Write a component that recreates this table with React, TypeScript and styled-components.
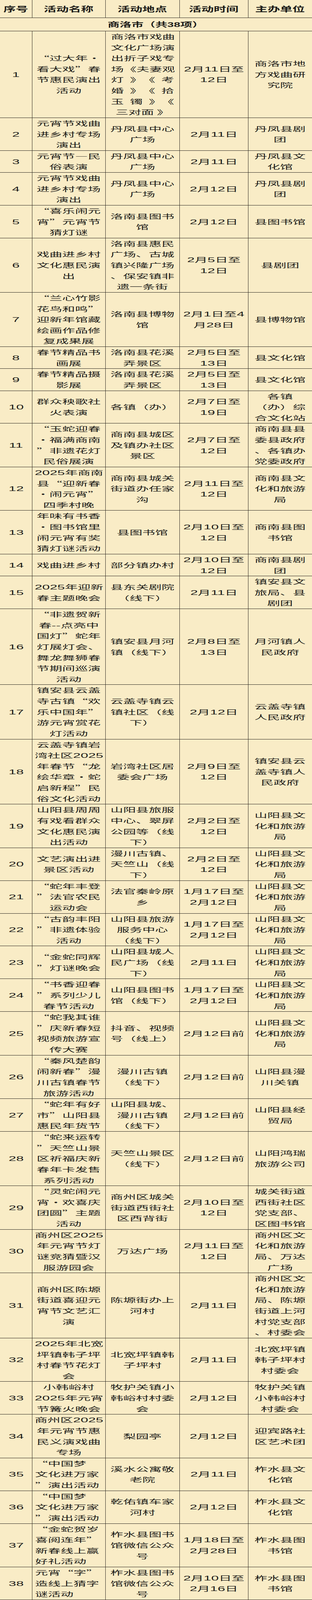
import React from "react";
import styled, { createGlobalStyle, css } from "styled-components";

// the sheet is a document table whose photo is stretched sideways; the
// frame also comes out taller than the page is laid out, so heights are
// given in frame pixels and divided back by SQUEEZE
const SQUEEZE = 1.527;
const v = (framePx: number) => `${(framePx / SQUEEZE).toFixed(2)}px`;

const STRETCH = 2.05;
const LINE = v(42.19);
const BG = "#f9ecc6";
const INK = "#1c1b18";
const RULE = "#2e2a22";

type Entry = {
  name: string[];
  place: string[];
  time: string[];
  org: string[];
  nameLeft?: boolean;
  placeJustify?: boolean;
};

const entries: Entry[] = [
  { name: ["“过大年·", "看大戏”春", "节惠民演出", "活动"], place: ["商洛市戏曲", "文化广场演", "出折子戏专", "场《夫妻观", "灯》《考", "婚》《拾", "玉镯》《", "三对面 》"], time: ["2月11日至", "12日"], org: ["商洛市地", "方戏曲研", "究院"], placeJustify: true },
  { name: ["元宵节戏曲", "进乡村专场", "演出"], place: ["丹凤县中心", "广场"], time: ["2月11日"], org: ["丹凤县剧", "团"] },
  { name: ["元宵节—民", "俗表演"], place: ["丹凤县中心", "广场"], time: ["2月11日"], org: ["丹凤县文", "化馆"] },
  { name: ["元宵节戏曲", "进乡村专场", "演出"], place: ["丹凤县中心", "广场"], time: ["2月12日"], org: ["丹凤县剧", "团"] },
  { name: ["“喜乐闹元", "宵”元宵节", "猜灯谜"], place: ["洛南县图书", "馆"], time: ["2月12日"], org: ["县图书馆"] },
  { name: ["戏曲进乡村", "文化惠民演", "出"], place: ["洛南县惠民", "广场、古城", "镇兴隆广场", "、保安镇非", "遗一条街"], time: ["2月5日至", "12日"], org: ["县剧团"] },
  { name: ["“兰心竹影", "花鸟和鸣”", "迎新年馆藏", "绘画作品修", "复成果展"], place: ["洛南县博物", "馆"], time: ["2月1日至4", "月28日"], org: ["县博物馆"] },
  { name: ["春节精品书", "画展"], place: ["洛南县花溪", "弄景区"], time: ["2月5日至", "13日"], org: ["县文化馆"] },
  { name: ["春节精品摄", "影展"], place: ["洛南县花溪", "弄景区"], time: ["2月5日至", "13日"], org: ["县文化馆"] },
  { name: ["群众秧歌社", "火表演"], place: ["各镇（办）"], time: ["2月7日至", "19日"], org: ["各镇", "（办）综", "合文化站"] },
  { name: ["“玉蛇迎春", "·福满商南", "”非遗花灯", "民俗展演"], place: ["商南县城区", "及镇办社区", "景区"], time: ["2月7日至", "12日"], org: ["商南县县", "委县政府", "、各镇办", "党委政府"] },
  { name: ["2025年商南", "县“迎新春", "·闹元宵”", "四季村晚"], place: ["商南县城关", "街道办任家", "沟"], time: ["2月11日至", "12日"], org: ["商南县文", "化和旅游", "局"] },
  { name: ["年味有书香", "·图书馆里", "闹元宵有奖", "猜灯谜活动"], place: ["县图书馆"], time: ["2月10日至", "12日"], org: ["商南县图", "书馆"] },
  { name: ["戏曲进乡村"], place: ["部分镇办村"], time: ["2月10日至", "12日"], org: ["商南县剧", "团"] },
  { name: ["2025年迎新", "春主题晚会"], place: ["县东关剧院", "（线下）"], time: ["2月11日"], org: ["镇安县文", "旅局、县", "剧团"] },
  { name: ["“非遗贺新", "春--点亮中", "国灯”蛇年", "灯展灯会、", "舞龙舞狮春", "节期间巡演", "活动"], place: ["镇安县月河", "镇（线下）"], time: ["2月8日至", "13日"], org: ["月河镇人", "民政府"] },
  { name: ["镇安县云盖", "寺古镇“欢", "乐中国年”", "游元宵赏花", "灯活动"], place: ["云盖寺镇云", "镇社区（线", "下）"], time: ["2月12日"], org: ["云盖寺镇", "人民政府"] },
  { name: ["云盖寺镇岩", "湾社区2025", "年春节“龙", "绘华章·蛇", "启新程”民", "俗文化活动"], place: ["岩湾社区居", "委会广场"], time: ["2月9日至", "12日"], org: ["镇安县云", "盖寺镇人", "民政府"] },
  { name: ["山阳县周周", "有戏看群众", "文化惠民演", "出活动"], place: ["山阳县旅服", "中心、翠屏", "公园等（线", "下）"], time: ["2月2日至", "12日"], org: ["山阳县文", "化和旅游", "局"] },
  { name: ["文艺演出进", "景区活动"], place: ["漫川古镇、", "天竺山（线", "下）"], time: ["2月2日至", "12日"], org: ["山阳县文", "化和旅游", "局"] },
  { name: ["“蛇年丰登", "”法官农民", "运动会"], place: ["法官秦岭原", "乡"], time: ["1月17日至", "2月12日"], org: ["山阳县文", "化和旅游", "局"] },
  { name: ["“古韵丰阳", "”非遗体验", "活动"], place: ["山阳县旅游", "服务中心", "（线下）"], time: ["1月17日至", "2月12日"], org: ["山阳县文", "化和旅游", "局"] },
  { name: ["“金蛇同辉", "”灯谜晚会"], place: ["山阳县城人", "民广场（线", "下）"], time: ["2月11日"], org: ["山阳县文", "化和旅游", "局"] },
  { name: ["“书香迎春", "”系列少儿", "春节活动"], place: ["山阳县图书", "馆（线下）"], time: ["1月17日至", "2月12日"], org: ["山阳县文", "化和旅游", "局"] },
  { name: ["“蛇我其谁", "”庆新春短", "视频旅游宣", "传大赛"], place: ["抖音、视频", "号（线上）"], time: ["2月12日前"], org: ["山阳县文", "化和旅游", "局"] },
  { name: ["“秦风楚韵", "闹新春”漫", "川古镇春节", "旅游活动"], place: ["漫川古镇", "（线下）"], time: ["2月12日前"], org: ["山阳县漫", "川关镇"] },
  { name: ["“蛇年有好", "市”山阳县", "惠民年货节"], place: ["山阳县城、", "漫川古镇", "（线下）"], time: ["2月12日前"], org: ["山阳县经", "贸局"] },
  { name: ["“蛇来运转", "”天竺山景", "区祈福庆新", "春年卡发售", "系列活动"], place: ["天竺山景区", "（线下）"], time: ["2月12日前"], org: ["山阳鸿瑞", "旅游公司"] },
  { name: ["“灵蛇闹元", "宵·欢喜庆", "团圆”主题", "活动"], place: ["商州区城关", "街道西街社", "区西背街"], time: ["2月10日至", "12日"], org: ["城关街道", "西街社区", "党支部、", "区图书馆"] },
  { name: ["商州区2025", "年元宵节灯", "谜竞猜暨汉", "服游园会"], place: ["万达广场"], time: ["2月11日至", "12日"], org: ["商州区文", "化和旅游", "局、万达", "广场"] },
  { name: ["商州区陈塬", "街道喜迎元", "宵节文艺汇", "演"], place: ["陈塬街办上", "河村"], time: ["2月11日"], org: ["商州区文", "化和旅游", "局、陈塬", "街道上河", "村党支部", "、村委会"] },
  { name: ["2025年北宽", "坪镇韩子坪", "村春节花灯", "会"], place: ["北宽坪镇韩", "子坪村"], time: ["2月11日"], org: ["北宽坪镇", "韩子坪村", "村委会"] },
  { name: ["小韩峪村", "2025年元宵", "节篝火晚会"], place: ["牧护关镇小", "韩峪村村委", "会"], time: ["2月12日"], org: ["牧护关镇", "小韩峪村", "村委会"] },
  { name: ["商州区2025", "年元宵节惠", "民义演戏曲", "专场"], place: ["梨园亭"], time: ["2月12日"], org: ["迎宾路社", "区艺术团"] },
  { name: ["“中国梦", "文化进万家", "”演出活动"], place: ["溪水公寓敬", "老院"], time: ["2月11日"], org: ["柞水县文", "化馆"], nameLeft: true },
  { name: ["“中国梦", "文化进万家", "”演出活动"], place: ["乾佑镇车家", "河村"], time: ["2月12日"], org: ["柞水县文", "化馆"], nameLeft: true },
  { name: ["“金蛇贺岁", "喜阅连年”", "新春线上赢", "好礼活动"], place: ["柞水县图书", "馆微信公众", "号"], time: ["1月18日至", "2月28日"], org: ["柞水县图", "书馆"], nameLeft: true },
  { name: ["元宵“字”", "造线上猜字", "谜活动"], place: ["柞水县图书", "馆微信公众", "号"], time: ["2月10日至", "2月16日"], org: ["柞水县图", "书馆"], nameLeft: true },
];

const GlobalStyle = createGlobalStyle`
  html, body {
    margin: 0;
    padding: 0;
    background: ${BG};
  }
  body {
    font-family: "Noto Sans CJK SC", "Noto Sans", sans-serif;
    color: ${INK};
    overflow-x: hidden;
  }
`;

const Sheet = styled.div`
  width: 800px;
  font-size: 16px;
  line-height: ${LINE};
`;

const Row = styled.div`
  display: grid;
  grid-template-columns: 82px 188px 190px 176px 1fr;
  border-bottom: 1px solid ${RULE};
`;

const Cell = styled.div<{ $left?: boolean }>`
  display: flex;
  flex-direction: column;
  justify-content: center;
  padding: 0 7px;
  text-align: ${(p) => (p.$left ? "left" : "center")};
  white-space: nowrap;

  &:not(:first-child) {
    border-left: 1.5px solid ${RULE};
  }
`;

const HeadCell = styled(Cell)`
  padding-top: ${v(13)};
  padding-bottom: ${v(13.3)};
  font-size: 18.5px;
  font-weight: 700;
`;

const SectionCell = styled.div`
  grid-column: 1 / -1;
  padding: ${v(4)} 0 ${v(4.3)};
  text-align: center;
  font-size: 17.5px;
  font-weight: 700;
  white-space: nowrap;
`;

const Line = styled.div`
  height: ${LINE};
  flex: 0 0 auto;
`;

const Glyphs = styled.span<{ $left?: boolean; $fill?: number; $stretch: number }>`
  display: inline-block;
  transform: scaleX(${(p) => p.$stretch});
  transform-origin: ${(p) => (p.$left ? "0 50%" : "50% 50%")};
  ${(p) =>
    p.$fill &&
    css`
      width: ${p.$fill}px;
      text-align: justify;
      text-align-last: justify;
    `}
`;

const Num = styled.span`
  font-family: "Liberation Sans Narrow", "Liberation Sans", sans-serif;
  font-size: 17px;
  line-height: 1;
`;

const withNumbers = (text: string) =>
  text.split(/(\d+)/).map((part, i) =>
    /^\d+$/.test(part) ? <Num key={i}>{part}</Num> : part
  );

type TextProps = { text: string; left?: boolean; fill?: number; stretch?: number };

const Text = ({ text, left, fill, stretch = STRETCH }: TextProps) => (
  <Glyphs $left={left} $fill={fill} $stretch={stretch}>
    {withNumbers(text)}
  </Glyphs>
);

const Lines = ({ lines, left, justify }: { lines: string[]; left?: boolean; justify?: boolean }) => (
  <>
    {lines.map((l, i) => (
      <Line key={i}>
        <Text text={l} left={left} fill={justify && i < lines.length - 1 ? 162 / STRETCH : undefined} />
      </Line>
    ))}
  </>
);

const headers = ["序号", "活动名称", "活动地点", "活动时间", "主办单位"];

const App = () => {
  return (
    <>
      <GlobalStyle />
      <Sheet lang="zh-CN">
        <Row>
          {headers.map((h) => (
            <HeadCell key={h}>
              <Line>
                <Text text={h} stretch={1.72} />
              </Line>
            </HeadCell>
          ))}
        </Row>
        <Row>
          <SectionCell>
            <Line>
              <Text text="商洛市（共38项）" stretch={1.75} />
            </Line>
          </SectionCell>
        </Row>
        {entries.map((e, i) => (
          <Row key={i}>
            <Cell>
              <Line>
                <Text text={String(i + 1)} />
              </Line>
            </Cell>
            <Cell $left={e.nameLeft}>
              <Lines lines={e.name} left={e.nameLeft} />
            </Cell>
            <Cell>
              <Lines lines={e.place} justify={e.placeJustify} />
            </Cell>
            <Cell>
              <Lines lines={e.time} />
            </Cell>
            <Cell>
              <Lines lines={e.org} />
            </Cell>
          </Row>
        ))}
      </Sheet>
    </>
  );
};

export default App;
